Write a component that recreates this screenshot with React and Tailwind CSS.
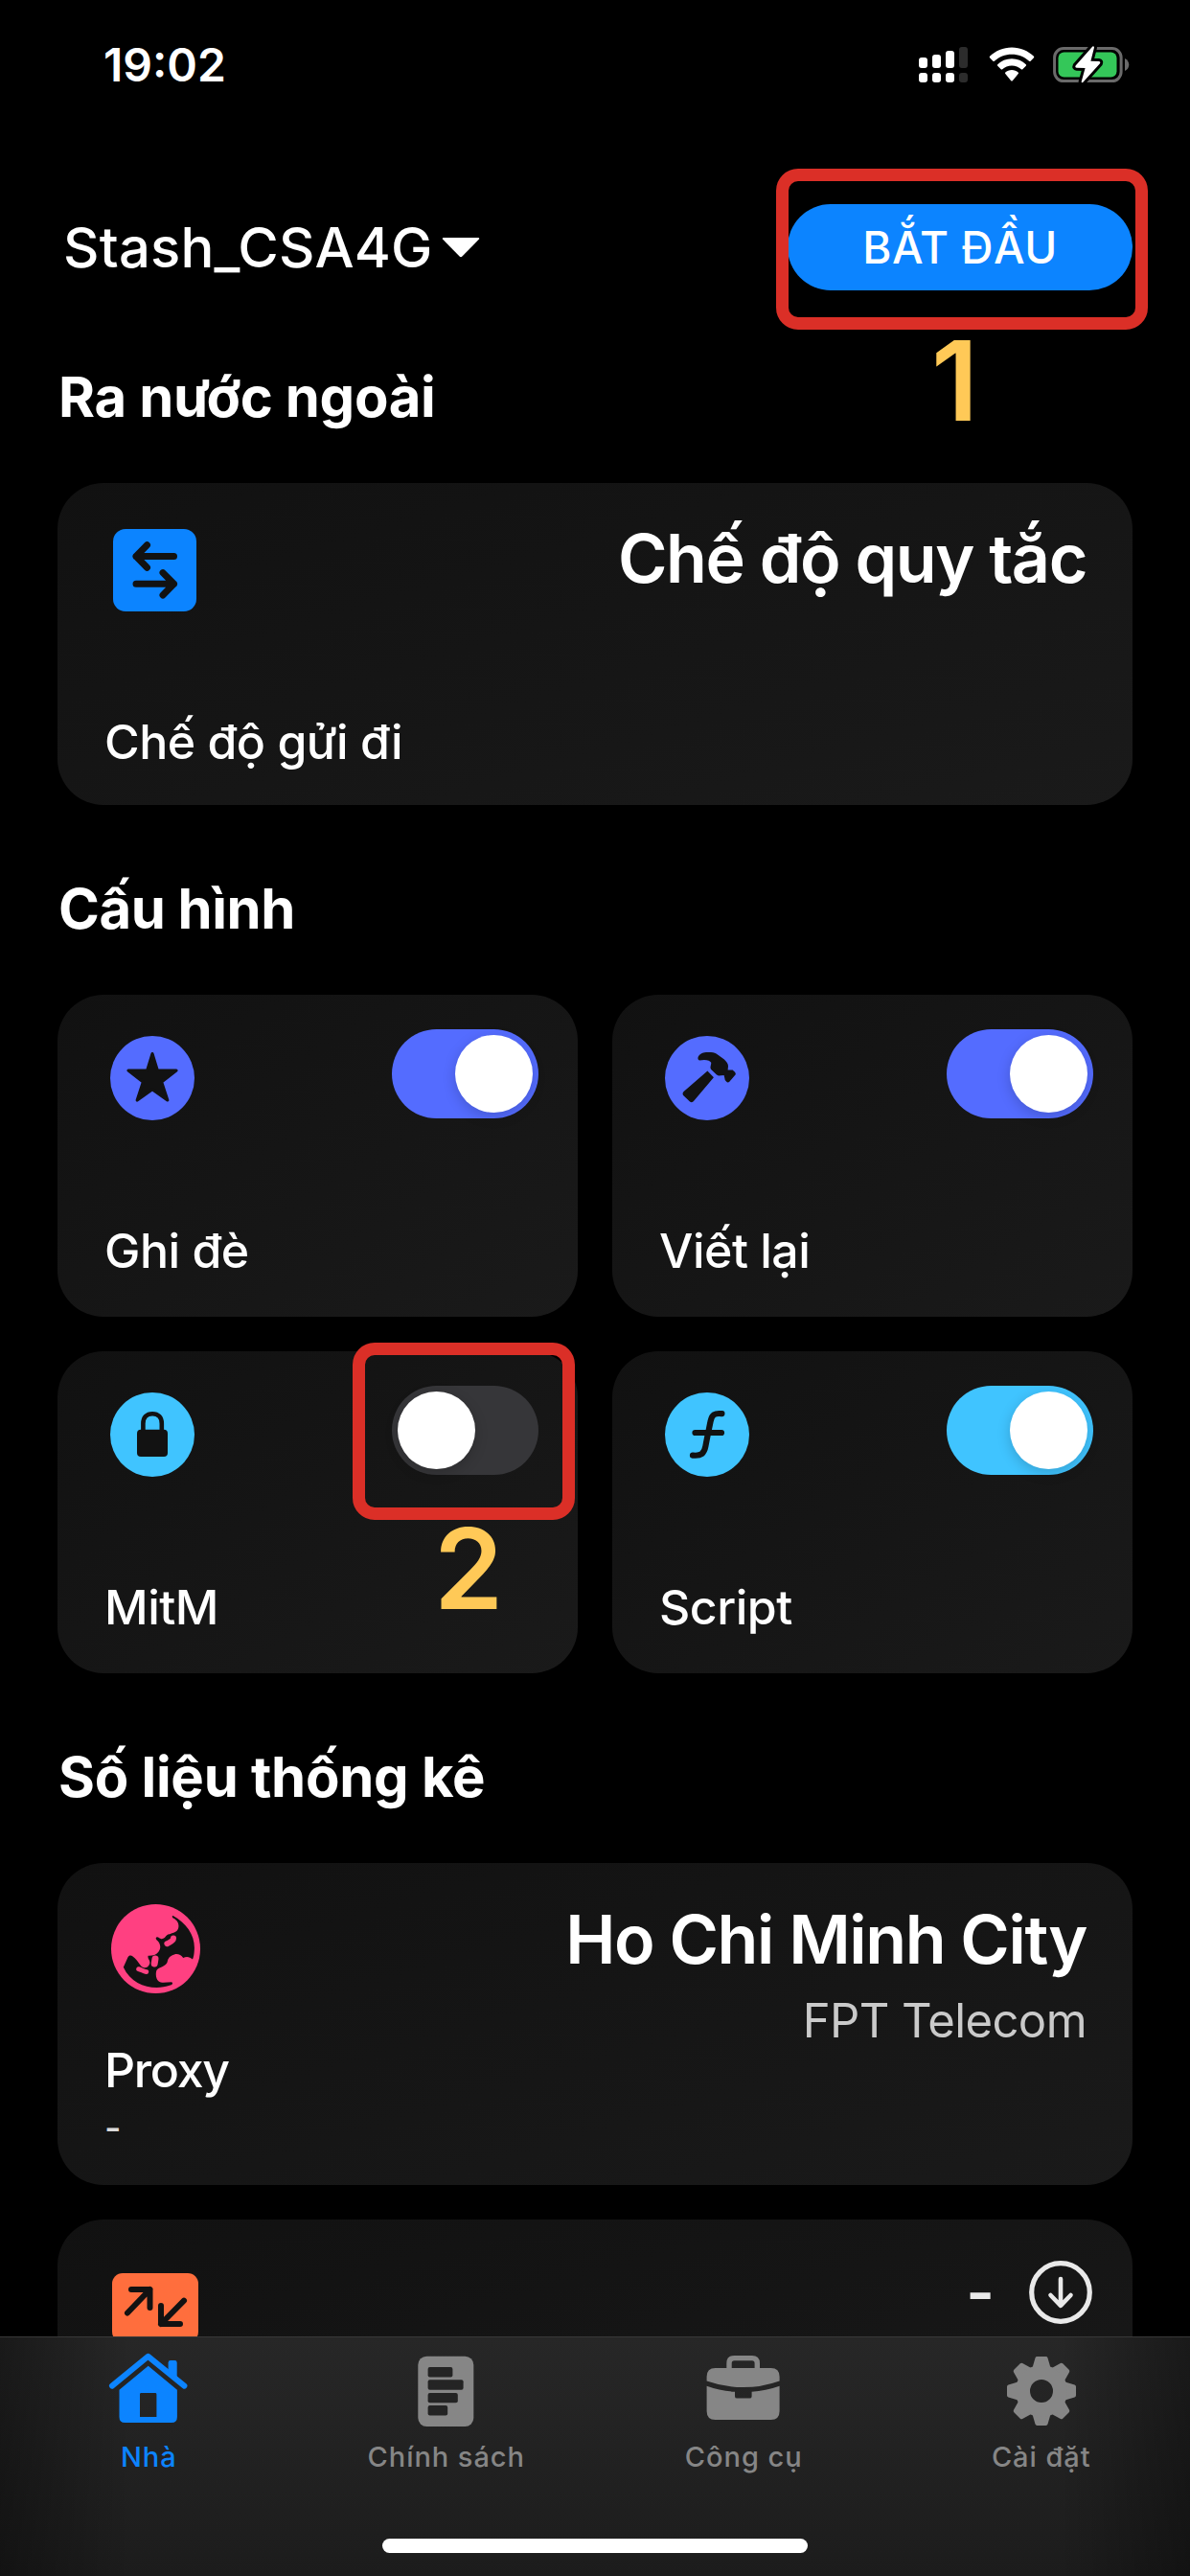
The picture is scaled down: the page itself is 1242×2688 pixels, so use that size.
import React from 'react';

const CARD =
  'flex flex-col h-[336px] rounded-[48px] bg-linear-to-br from-[#111111] to-[#1a1a1a]';

function SignalIcon() {
  return (
    <svg width="51" height="38" viewBox="0 0 51 38" fill="#fff">
      <rect x="0" y="11" width="9" height="11" rx="3" />
      <rect x="14" y="8" width="9" height="14" rx="3" />
      <rect x="28" y="4" width="9" height="18" rx="3" />
      <rect x="42" y="0" width="9" height="22" rx="3" fill="#2c2c2c" />
      <rect x="0" y="27" width="9" height="10" rx="3" />
      <rect x="14" y="27" width="9" height="10" rx="3" />
      <rect x="28" y="27" width="9" height="10" rx="3" />
      <rect x="42" y="27" width="9" height="10" rx="3" fill="#2c2c2c" />
    </svg>
  );
}

function WifiIcon() {
  return (
    <svg width="48" height="38" viewBox="0 0 48 38" fill="#fff">
      <path d="M24 0.5 C33 0.5 41 4 47 9.8 Q47.6 10.6 47 11.3 L43.6 14.8 Q42.9 15.4 42.1 14.8 C37.2 10.3 31 7.8 24 7.8 C17 7.8 10.8 10.3 5.9 14.8 Q5.1 15.4 4.4 14.8 L1 11.3 Q0.4 10.6 1 9.8 C7 4 15 0.5 24 0.5 Z" />
      <path d="M24 12.3 C29.8 12.3 35 14.5 38.8 18.2 Q39.5 19 38.8 19.7 L35.3 23.2 Q34.6 23.8 33.8 23.2 C31.2 20.8 27.8 19.4 24 19.4 C20.2 19.4 16.8 20.8 14.2 23.2 Q13.4 23.8 12.7 23.2 L9.2 19.7 Q8.5 19 9.2 18.2 C13 14.5 18.2 12.3 24 12.3 Z" />
      <path d="M24 24 C26.6 24 29 25 30.7 26.6 Q31.4 27.4 30.7 28.1 L24.8 35.2 Q24 36 23.2 35.2 L17.3 28.1 Q16.6 27.4 17.3 26.6 C19 25 21.4 24 24 24 Z" />
    </svg>
  );
}

function BatteryIcon() {
  return (
    <svg width="80" height="38" viewBox="0 0 80 38" className="overflow-visible">
      <rect x="1.6" y="1.6" width="69.5" height="34" rx="9.5" fill="none" stroke="#6a6a6a" strokeWidth="3" />
      <path d="M75 12 C78 13.5 79.3 16 79.3 18.5 C79.3 21 78 23.5 75 25 Z" fill="#6a6a6a" />
      <rect x="5.5" y="5.6" width="61" height="26" rx="6" fill="#34c759" />
      <path
        d="M41.3 -0.5 L23.6 19.6 Q22.6 21.6 24.8 21.8 L33.6 22 L29.6 36.4 Q30.2 37.8 31.4 36.8 L49 17.2 Q50 15.2 47.8 15 L39.4 14.8 L43 0.4 Q42.6 -1.2 41.3 -0.5 Z"
        fill="#fff"
        stroke="#000"
        strokeWidth="6"
        strokeLinejoin="round"
        paintOrder="stroke"
      />
    </svg>
  );
}

function SwapIcon() {
  return (
    <svg width="87" height="86" viewBox="0 0 87 86">
      <rect width="87" height="86" rx="13" fill="#0c84ff" />
      <g fill="none" stroke="#121212" strokeWidth="7" strokeLinecap="round" strokeLinejoin="round">
        <path d="M63.5 28.5 H24 M35.5 16.8 L24 28.5 L35.5 40.2" />
        <path d="M24 57.3 H63.5 M52 45.6 L63.5 57.3 L52 69" />
      </g>
    </svg>
  );
}

function StarIcon() {
  return (
    <svg width="88" height="88" viewBox="0 0 88 88">
      <circle cx="44" cy="44" r="44" fill="#546cff" />
      <path
        d="M44 18.6 L49.2 35.8 L69 36 L53.6 48 L59.8 67 L44 55.6 L28.2 67 L34.4 48 L19 36 L38.8 35.8 Z"
        fill="#121212"
        stroke="#121212"
        strokeWidth="3.2"
        strokeLinejoin="round"
      />
    </svg>
  );
}

function HammerIcon() {
  return (
    <svg width="88" height="88" viewBox="0 0 88 88">
      <circle cx="44" cy="44" r="44" fill="#546cff" />
      <g fill="#121212">
        <path d="M44.4 36.6 L50.9 43.3 L30.4 67.6 Q28.4 70.2 26 68.6 L19.4 62.2 Q17.6 60.2 19.6 58 Z" />
        <path d="M36 25.6 Q33.6 24.6 34.8 21.6 C36.5 18 41 16.8 45.5 17 C49 17 51.5 17.4 53.6 18.6 L61.6 24.3 C64.5 27 66 29 66 31.5 L65.6 35.4 L70.6 35.6 Q73.5 37.6 73.9 40 L67.3 47.8 Q65.6 49.2 64 47.6 Q62.2 45.8 62.2 43.6 L61.6 41 L56 41.4 L54 40.6 L48.2 35 C46.4 33 48.6 29.6 48.2 27.8 C47 25.4 42 24 36 25.6 Z" />
      </g>
    </svg>
  );
}

function LockIcon() {
  return (
    <svg width="88" height="88" viewBox="0 0 88 88">
      <circle cx="44" cy="44" r="44" fill="#40c4ff" />
      <rect x="28" y="38.7" width="32" height="28.3" rx="4" fill="#121212" />
      <path d="M34.4 41 V32.5 C34.4 26 38 22.3 44.1 22.3 C50.2 22.3 53.8 26 53.8 32.5 V41" fill="none" stroke="#121212" strokeWidth="4.6" />
    </svg>
  );
}

function FunctionIcon() {
  return (
    <svg width="88" height="88" viewBox="0 0 88 88">
      <circle cx="44" cy="44" r="44" fill="#40c4ff" />
      <g fill="none" stroke="#121212" strokeWidth="6.2" strokeLinecap="round">
        <path d="M59.4 22.2 C51.5 21.2 49 23.5 47.6 30 C46 38 44 47 42.4 56 C41 63.5 38 66.6 29 65.6" />
        <path d="M31.5 42 H59" />
      </g>
    </svg>
  );
}

function GlobeIcon() {
  return (
    <svg width="93" height="93" viewBox="0 0 93 93">
      <circle cx="46.5" cy="46.5" r="46.5" fill="#ff4081" />
      <path
        fill="#121212"
        d="M64.6 12 C79 20 88 33 86.8 48 C86.6 52 86.2 55 85 57.6 C82 55 79 54.4 75.2 56 C73 52.5 69 51.4 66 52.4 C61.5 53.6 59.4 56 58.6 60.5 C57 65 50 65.5 47.4 69 C46 73 47 78 49.4 80.2 C52.4 82.6 57 81.4 63 81.2 C65 82 63.8 84 61.8 84.6 C45 90.5 22 86 12.8 65.7 L17.4 55.4 C19 52.6 21 53.2 22.6 54.6 C26 57 28 60.5 31.2 64.4 C34 67.4 39 66.6 40.2 62 C41.2 58 37.6 57.4 38.6 53.8 C43 54 47 53 49.2 50 C51.8 46.5 52 43 49.4 39.2 C47 37 45.8 35.4 47.4 34.4 C49.6 33.8 50.6 36.6 53 36.2 C56.6 35.8 56 33.6 59.4 31.6 C64 30 68.6 29.4 70 25.4 C71.6 20 68.4 16.4 64.6 14.6 C63.2 13 63.6 12 64.6 12 Z"
      />
      <path d="M65 35.6 C65 38.6 62 39.4 58.4 41.2" fill="none" stroke="#ff4081" strokeWidth="6" strokeLinecap="round" />
      <path d="M46 57 L45.2 62" stroke="#ff4081" strokeWidth="7" strokeLinecap="round" />
      <path d="M28.6 67.6 C31.6 68.4 33 69.8 36.8 70.6" fill="none" stroke="#ff4081" strokeWidth="4.8" strokeLinecap="round" />
    </svg>
  );
}

function TrafficIcon() {
  return (
    <svg width="90" height="72" viewBox="0 0 90 72">
      <rect width="90" height="72" rx="11" fill="#ff6e3d" />
      <g fill="none" stroke="#121212" strokeWidth="6" strokeLinecap="round" strokeLinejoin="round">
        <path d="M16 41.5 L39.5 17 M20 17 H39.5 V36" />
        <path d="M75 28.6 L51 53 M51 34 V53 H71" />
      </g>
    </svg>
  );
}

function DownloadIcon() {
  return (
    <svg width="66" height="66" viewBox="0 0 66 66" fill="none" stroke="#e9e9e9" strokeLinecap="round" strokeLinejoin="round">
      <circle cx="33" cy="33" r="30.3" strokeWidth="5.2" />
      <path d="M33 19 V46.5 M22.5 36 L33 46.8 L43.5 36" strokeWidth="4.6" />
    </svg>
  );
}

function HomeIcon() {
  return (
    <svg width="100" height="90" viewBox="0 0 100 90" fill="#0c84ff">
      <path d="M12 41.6 L49.6 10.8 L87.4 41.6" fill="none" stroke="#0c84ff" strokeWidth="6" strokeLinecap="round" strokeLinejoin="round" />
      <path d="M70.6 28 V17.4 Q70.6 15 73 15 H77.3 Q79.7 15 79.7 17.4 V35.6 Z" />
      <path fillRule="evenodd" d="M49.7 20.8 L79.9 45.8 V74 Q79.9 80 74 80 H25.4 Q19.5 80 19.5 74 V45.8 Z M41 50.4 V74 H58.4 V50.4 Q58.4 49 57 49 H42.4 Q41 49 41 50.4 Z" />
    </svg>
  );
}

function PolicyIcon() {
  return (
    <svg width="100" height="90" viewBox="0 0 100 90">
      <rect x="20.3" y="10.7" width="58" height="73.4" rx="9" fill="#868686" />
      <g fill="#242424">
        <rect x="30.6" y="22" width="25.8" height="10.5" rx="2" />
        <rect x="30.6" y="35.2" width="37" height="10.6" rx="2" />
        <rect x="30.6" y="49" width="31.2" height="10.2" rx="2" />
        <rect x="30.6" y="62" width="20.6" height="10.6" rx="2" />
      </g>
    </svg>
  );
}

function ToolsIcon() {
  return (
    <svg width="100" height="90" viewBox="0 0 100 90" fill="#868686">
      <path d="M35 25 V18 Q35 12.6 40.4 12.6 H58.9 Q64.3 12.6 64.3 18 V25" fill="none" stroke="#868686" strokeWidth="5.4" />
      <path d="M11.6 36.4 V32 Q11.6 23 20.6 23 H78.6 Q87.6 23 87.6 32 V36.4 Q49.6 49.8 11.6 36.4 Z" />
      <path d="M11.6 41.8 Q26 47 41 47.8 V52.4 Q41 54.6 43.2 54.6 H56.4 Q58.6 54.6 58.6 52.4 V47.8 Q73 47 87.6 41.8 V68 Q87.6 77 78.6 77 H20.6 Q11.6 77 11.6 68 Z" />
    </svg>
  );
}

function SettingsIcon() {
  return (
    <svg width="100" height="90" viewBox="0 0 100 90">
      <g fill="#868686" stroke="#868686" strokeWidth="4" strokeLinejoin="round">
        {[0, 45, 90, 135, 180, 225, 270, 315].map((a) => (
          <path key={a} d="M-7.5 -24 L-4.6 -34 H4.6 L7.5 -24 Z" transform={`translate(50 47) rotate(${a})`} />
        ))}
      </g>
      <circle cx="50" cy="47" r="19.5" fill="none" stroke="#868686" strokeWidth="15" />
    </svg>
  );
}

function Toggle({ on, track }) {
  return (
    <div className={`flex h-[93px] w-[153px] items-center rounded-full px-[6px] ${track} ${on ? 'justify-end' : 'justify-start'}`}>
      <div className="h-[81px] w-[81px] rounded-full bg-white shadow-[0_4px_14px_rgba(0,0,0,0.18)]" />
    </div>
  );
}

function SectionTitle({ children, className }) {
  return (
    <h2 className={`mb-[50px] h-[80px] pl-[1px] text-[58px] leading-[80px] font-bold ${className}`}>{children}</h2>
  );
}

function ToggleCard({ icon, label, on, track, children }) {
  return (
    <div className={`${CARD} relative pt-[36px] pb-[39px]`}>
      <div className="flex items-start justify-between pr-[41px] pl-[55px]">
        <div className="mt-[7px]">{icon}</div>
        <Toggle on={on} track={track} />
      </div>
      <div className="mt-auto pl-[49px] text-[50px] leading-[60px] font-medium tracking-[-0.5px]">{label}</div>
      {children}
    </div>
  );
}

function Tab({ icon, label, className }) {
  return (
    <div className="flex flex-col items-center pt-[9px]">
      {icon}
      <div className={`mt-[6px] text-[29px] leading-[40px] font-medium tracking-[0.95px] ${className}`}>{label}</div>
    </div>
  );
}

export default function App() {
  return (
    <div className="flex h-[2688px] w-[1242px] flex-col overflow-hidden bg-black font-['Inter','Noto_Sans',sans-serif] text-white">
      <main className="flex h-[2438px] shrink-0 flex-col overflow-hidden">
        <div className="flex h-[136px] shrink-0 items-center justify-between pr-[63px] pl-[108px]">
          <div className="text-[48px] leading-[60px] font-semibold">19:02</div>
          <div className="flex items-center">
            <SignalIcon />
            <div className="ml-[22px]"><WifiIcon /></div>
            <div className="ml-[19px]"><BatteryIcon /></div>
          </div>
        </div>

        <div className="mt-[77px] flex h-[90px] shrink-0 items-center justify-between pr-[60px] pl-[66px]">
          <div className="flex items-center">
            <div className="text-[58px] leading-[80px] font-medium tracking-[0.2px]">Stash_CSA4G</div>
            <svg className="ml-[9px]" width="40" height="21" viewBox="0 0 40 21" fill="#fff">
              <path d="M2 0 H38 Q40 0.4 38.8 1.8 L21.4 19.6 Q20 21 18.6 19.6 L1.2 1.8 Q0 0.4 2 0 Z" />
            </svg>
          </div>
          <div className="relative flex h-[90px] w-[360px] items-center justify-center rounded-full bg-[#0c84ff]">
            <span className="text-[46px] leading-[60px] font-medium tracking-[0.49px]">BẮT ĐẦU</span>
            <div className="absolute top-[-37px] left-[-12px] h-[168px] w-[388px] rounded-[23px] border-[13px] border-[#db2f27]" />
            <div className="absolute top-[126px] left-[150px] text-[116px] leading-[116px] font-semibold text-[#ffc957]">1</div>
          </div>
        </div>

        <div className="mt-[71px] flex shrink-0 flex-col px-[60px]">
          <SectionTitle className="tracking-[-0.36px]">Ra nước ngoài</SectionTitle>
          <div className={`${CARD} pt-[37px] pb-[36px]`}>
            <div className="flex items-start justify-between pr-[48px] pl-[58px]">
              <div className="mt-[11px]"><SwapIcon /></div>
              <div className="text-[70px] leading-[84px] font-semibold tracking-[-1.41px]">Chế độ quy tắc</div>
            </div>
            <div className="mt-auto pl-[49px] text-[50px] leading-[60px] font-medium tracking-[-0.5px]">Chế độ gửi đi</div>
          </div>

          <SectionTitle className="mt-[68px] tracking-[-0.45px]">Cấu hình</SectionTitle>
          <div className="grid grid-cols-2 gap-[36px]">
            <ToggleCard icon={<StarIcon />} label="Ghi đè" on track="bg-[#546cff]" />
            <ToggleCard icon={<HammerIcon />} label="Viết lại" on track="bg-[#546cff]" />
            <ToggleCard icon={<LockIcon />} label="MitM" track="bg-[#363639]">
              <div className="absolute top-[-9px] left-[308px] h-[185px] w-[232px] rounded-[23px] border-[13px] border-[#db2f27]" />
              <div className="absolute top-[169px] left-[393px] text-[116px] leading-[116px] font-semibold text-[#ffc957]">2</div>
            </ToggleCard>
            <ToggleCard icon={<FunctionIcon />} label="Script" on track="bg-[#40c4ff]" />
          </div>

          <SectionTitle className="mt-[68px] tracking-[-0.27px]">Số liệu thống kê</SectionTitle>
          <div className={`${CARD} pt-[38px] pb-[31px]`}>
            <div className="flex h-[148px] items-start justify-between pr-[48px] pl-[56px]">
              <div className="mt-[5px]"><GlobeIcon /></div>
              <div className="flex flex-col items-end">
                <div className="text-[70px] leading-[84px] font-semibold tracking-[-1.41px]">Ho Chi Minh City</div>
                <div className="mt-[13px] text-[49px] leading-[60px] font-normal tracking-[-0.58px] text-[#cacaca]">FPT Telecom</div>
              </div>
            </div>
            <div className="pl-[49px] text-[50px] leading-[60px] font-medium tracking-[-1.3px]">Proxy</div>
            <div className="pl-[49px] text-[38px] leading-[60px] font-medium text-[#dcdcdc]">-</div>
          </div>

          <div className={`${CARD} mt-[36px] pt-[43px]`}>
            <div className="flex items-start justify-between pr-[42px] pl-[57px]">
              <div className="mt-[13px]"><TrafficIcon /></div>
              <div className="flex items-center gap-[36px]">
                <div className="text-[64px] leading-[66px] font-semibold text-[#e9e9e9]">-</div>
                <DownloadIcon />
              </div>
            </div>
          </div>
        </div>
      </main>

      <nav className="flex h-[250px] shrink-0 flex-col border-t border-[#383838] bg-[linear-gradient(90deg,rgba(0,0,0,0.34),transparent_11%,transparent_89%,rgba(0,0,0,0.34)),linear-gradient(180deg,#272727,#1c1c1c)]">
        <div className="grid grid-cols-4">
          <Tab icon={<HomeIcon />} label="Nhà" className="text-[#0c84ff]" />
          <Tab icon={<PolicyIcon />} label="Chính sách" className="text-[#868686]" />
          <Tab icon={<ToolsIcon />} label="Công cụ" className="text-[#868686]" />
          <Tab icon={<SettingsIcon />} label="Cài đặt" className="text-[#868686]" />
        </div>
        <div className="mx-auto mt-auto mb-[24px] h-[15px] w-[444px] rounded-full bg-white" />
      </nav>
    </div>
  );
}
